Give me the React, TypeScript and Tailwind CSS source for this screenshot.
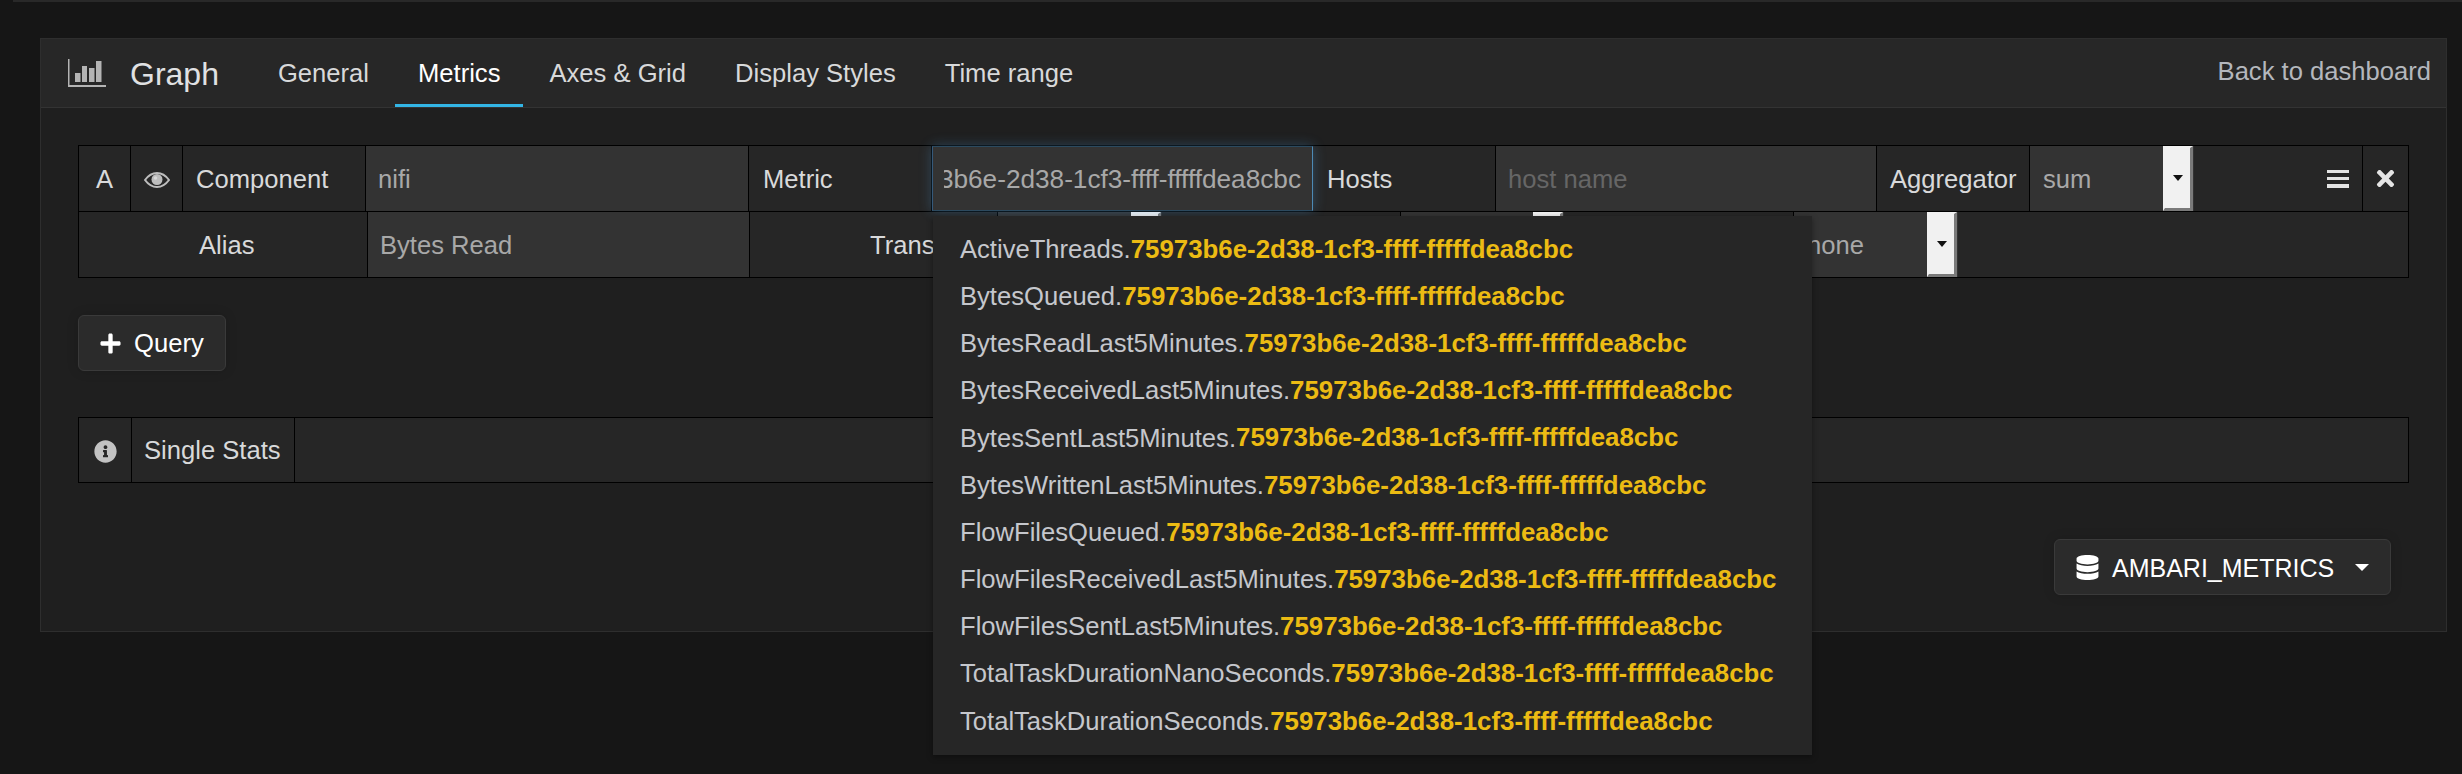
import type { ReactNode } from 'react';
import { FaDatabase, FaInfoCircle, FaPlus, FaTimes } from 'react-icons/fa';

const QUERY_ID = '75973b6e-2d38-1cf3-ffff-fffffdea8cbc';

const metrics = [
  'ActiveThreads',
  'BytesQueued',
  'BytesReadLast5Minutes',
  'BytesReceivedLast5Minutes',
  'BytesSentLast5Minutes',
  'BytesWrittenLast5Minutes',
  'FlowFilesQueued',
  'FlowFilesReceivedLast5Minutes',
  'FlowFilesSentLast5Minutes',
  'TotalTaskDurationNanoSeconds',
  'TotalTaskDurationSeconds',
];

const tabs = ['General', 'Metrics', 'Axes & Grid', 'Display Styles', 'Time range'];

function GraphIcon() {
  return (
    <svg width="38" height="28" viewBox="0 0 38 28" className="shrink-0 text-[#b4b4b4]" fill="currentColor">
      <rect x="0" y="0" width="1.5" height="28" />
      <rect x="0" y="26" width="38" height="2" />
      <rect x="7" y="14" width="5.5" height="9" />
      <rect x="14" y="7" width="5" height="16" />
      <rect x="21" y="9" width="5.5" height="14" />
      <rect x="28" y="2" width="5.5" height="21" />
    </svg>
  );
}

function EyeIcon() {
  return (
    <svg width="26" height="16" viewBox="0 0 26 16" className="text-[#bdbdbd]">
      <path d="M1 8C4.500 3.200 8.600 1 13 1s8.500 2.200 12 7c-3.500 4.800-7.600 7-12 7S4.500 12.800 1 8Z" fill="none" stroke="currentColor" strokeWidth="2" />
      <circle cx="13" cy="7.500" r="5.500" fill="currentColor" />
      <circle cx="11.500" cy="6" r="1.800" fill="#d8d8d8" />
    </svg>
  );
}

function BarsIcon() {
  return (
    <div className="flex h-[18px] w-[22px] flex-col justify-between">
      <div className="h-[3.500px] bg-[#e4e4e4]" />
      <div className="h-[3.500px] bg-[#e4e4e4]" />
      <div className="h-[3.500px] bg-[#e4e4e4]" />
    </div>
  );
}

// cell in a query row, width includes the black divider
function Cell({ w, className = '', children }: { w: number; className?: string; children?: ReactNode }) {
  return (
    <div
      className={`flex shrink-0 items-center border-r border-black pt-[2px] ${className}`}
      style={{ width: w }}
    >
      {children}
    </div>
  );
}

// native-looking number spinner button of the select inputs
function SelectCell({ w, value }: { w: number; value?: string }) {
  return (
    <div className="flex shrink-0 items-stretch bg-[#333333]" style={{ width: w }}>
      <div className="flex flex-1 items-center pt-[2px] pl-[13px] text-[#a8a8a8]">{value}</div>
      <div className="flex w-[30px] items-center justify-center border-t-[2px] border-r-[3px] border-b-[3px] border-l-[2px] border-t-[#f1f1f1] border-r-[#7a7a7a] border-b-[#7a7a7a] border-l-[#f1f1f1] bg-[#f1f1f1]">
        <div className="h-0 w-0 border-x-[5px] border-t-[6px] border-x-transparent border-t-[#111111]" />
      </div>
      <div className="w-px shrink-0" />
    </div>
  );
}

function MetricDropdown() {
  return (
    <div className="absolute top-[216px] left-[933px] z-20 w-[879px] bg-[#262626] py-[10px] shadow-[0_2px_6px_rgba(0,0,0,0.4)]">
      {metrics.map((name) => (
        <div key={name} className="flex h-[47.200px] items-center whitespace-nowrap pl-[27px] text-[#c5c7cc]">
          {name}.<span className="text-[25.850px] font-bold text-[#ecbb13]">{QUERY_ID}</span>
        </div>
      ))}
    </div>
  );
}

export default function App() {
  return (
    <div className="relative h-[774px] overflow-hidden bg-[#161616] font-['Liberation_Sans',Arial,sans-serif] text-[25.600px] leading-none text-[#d8d9da]">
      <div className="ml-[13px] h-[2px] bg-[#292929]" />

      <div className="mt-[36px] mr-[15px] ml-[40px] border border-[#2e2e2e] bg-[#1f1f1f]">
        {/* Header */}
        <div className="flex h-[69px] items-stretch border-b border-[#333333] bg-[#272727] pl-[27px]">
          <div className="flex items-center gap-[24px]">
            <GraphIcon />
            <span className="pt-[2px] text-[32px] text-[#e0e1e3]">Graph</span>
          </div>
          <div className="ml-[36px] flex items-stretch gap-[3px]">
            {tabs.map((tab) => (
              <div
                key={tab}
                className={
                  tab === 'Metrics'
                    ? 'flex items-center border-b-[3px] border-[#33b5e5] px-[23px] pt-[5px] text-white'
                    : 'flex items-center border-b-[3px] border-transparent px-[23px] pt-[5px]'
                }
              >
                {tab}
              </div>
            ))}
          </div>
          <div className="ml-auto flex items-center pr-[15px] pb-[2px] text-[#b4b7bd]">Back to dashboard</div>
        </div>

        {/* Query editor */}
        <div className="px-[37px] pt-[37px] pb-[36px]">
          <div className="border border-black bg-[#262626]">
            <div className="flex h-[66px] items-stretch border-b border-black">
              <Cell w={52} className="justify-center">A</Cell>
              <Cell w={52} className="justify-center"><EyeIcon /></Cell>
              <Cell w={183} className="pl-[13px]">Component</Cell>
              <Cell w={383} className="bg-[#333333] pl-[12px] text-[#a8a8a8]">nifi</Cell>
              <Cell w={183} className="pl-[14px]">Metric</Cell>
              <div className="relative z-10 flex w-[381px] shrink-0 items-center border-y border-r border-l border-t-[#2c4a5f] border-r-[#4d8ab5] border-b-[#2c4a5f] border-l-[#35597a] bg-[#333333] px-[11px] pt-[2px] text-[26.200px] text-[#a8a8a8] shadow-[0_0_12px_rgba(82,168,236,0.3)]">
                <div className="flex min-w-0 flex-1 justify-end overflow-hidden">
                  <span className="shrink-0 whitespace-nowrap">ActiveThreads.{QUERY_ID}</span>
                </div>
              </div>
              <Cell w={183} className="pl-[14px]">Hosts</Cell>
              <Cell w={381} className="bg-[#333333] pl-[12px] text-[#666666]">host name</Cell>
              <Cell w={153} className="pl-[13px]">Aggregator</Cell>
              <SelectCell w={164} value="sum" />
              <div className="flex flex-1 items-center justify-end border-r border-black pr-[13px]">
                <BarsIcon />
              </div>
              <div className="flex w-[45px] shrink-0 items-center justify-center">
                <FaTimes className="text-[25px] text-[#e4e4e4]" />
              </div>
            </div>

            <div className="flex h-[65px] items-stretch">
              <Cell w={289} className="pl-[120px]">Alias</Cell>
              <Cell w={382} className="bg-[#333333] pl-[12px] text-[#a8a8a8]">Bytes Read</Cell>
              <Cell w={248} className="pl-[120px]">Transform</Cell>
              <SelectCell w={164} />
              <Cell w={239} />
              <SelectCell w={163} />
              <Cell w={230} />
              <SelectCell w={164} value="none" />
            </div>
          </div>

          <button className="mt-[37px] flex h-[56px] w-[148px] items-center rounded-[6px] border border-[#3a3a3a] bg-[#2b2b2b] pl-[19.500px] text-white shadow-[0_0_12px_rgba(0,0,0,0.15)]">
            <FaPlus className="text-[23px]" />
            <span className="ml-[12.500px] pt-[2px]">Query</span>
          </button>

          <div className="mt-[46px] flex h-[66px] items-stretch border border-black bg-[#262626]">
            <Cell w={53} className="justify-center">
              <FaInfoCircle className="text-[23px] text-[#c2c2c2]" />
            </Cell>
            <Cell w={163} className="pl-[12px]">Single Stats</Cell>
          </div>

          <div className="mt-[56px] flex justify-end pr-[18px]">
            <button className="flex h-[56px] w-[337px] items-center rounded-[6px] border border-[#3a3a3a] bg-[#2b2b2b] pl-[19.500px] text-white shadow-[0_0_12px_rgba(0,0,0,0.15)]">
              <FaDatabase className="text-[25px]" />
              <span className="ml-[12.500px] pt-[2px] text-[25px]">AMBARI_METRICS</span>
              <span className="ml-[21px] h-0 w-0 border-x-[7.500px] border-t-[7px] border-x-transparent border-t-white" />
            </button>
          </div>
        </div>
      </div>

      <MetricDropdown />
    </div>
  );
}
